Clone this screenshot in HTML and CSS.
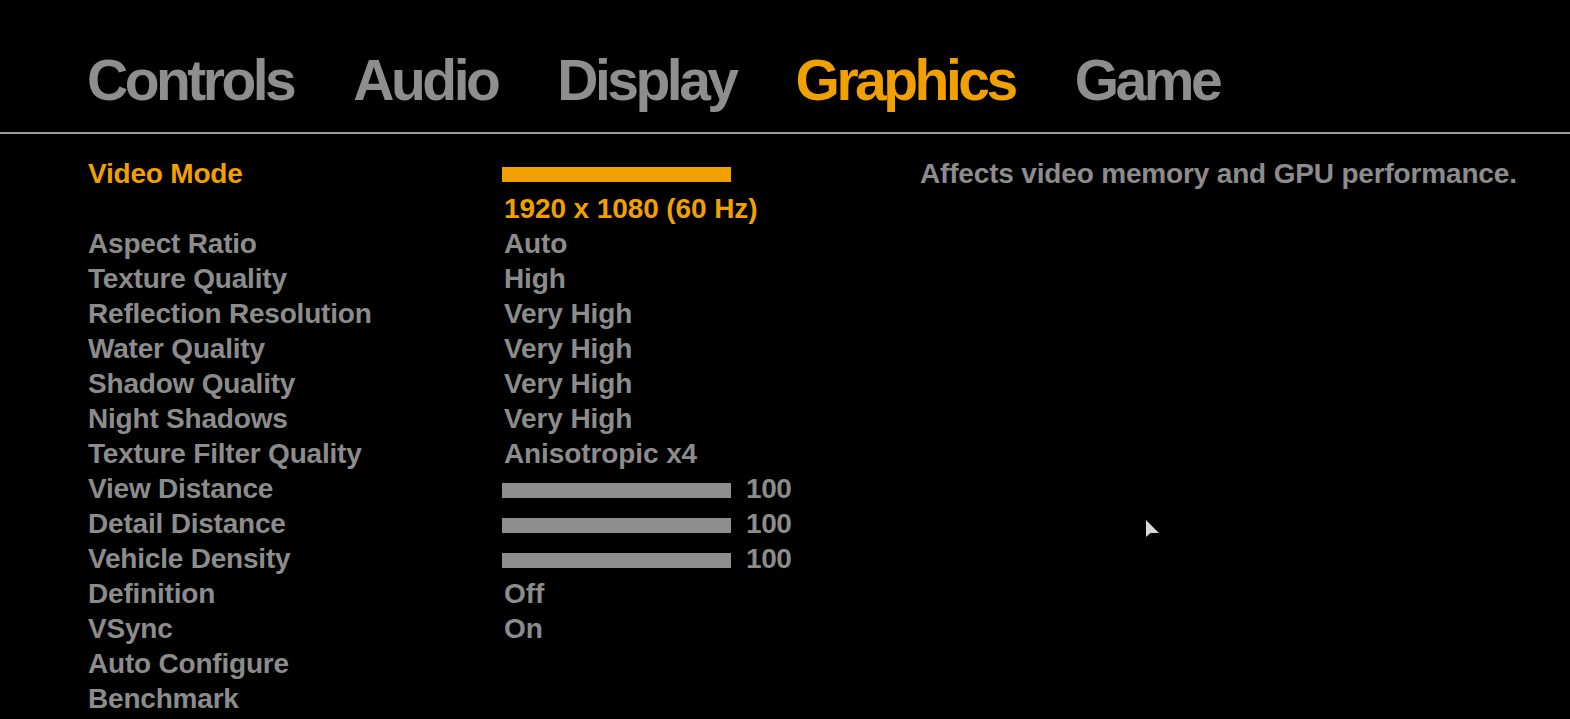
FILE: index.html
```html
<!DOCTYPE html>
<html>
<head>
<meta charset="utf-8">
<link rel="stylesheet" href="styles.css">
</head>
<body>
<header class="tabs">
  <span class="tab">Controls</span>
  <span class="tab">Audio</span>
  <span class="tab">Display</span>
  <span class="tab active">Graphics</span>
  <span class="tab">Game</span>
</header>
<main class="content">
  <div class="settings">
    <div class="label active">Video Mode</div>
    <div class="value"><div class="bar orange"></div></div>
    <div class="label"></div>
    <div class="value text active">1920 x 1080 (60 Hz)</div>

    <div class="label">Aspect Ratio</div><div class="value text">Auto</div>
    <div class="label">Texture Quality</div><div class="value text">High</div>
    <div class="label">Reflection Resolution</div><div class="value text">Very High</div>
    <div class="label">Water Quality</div><div class="value text">Very High</div>
    <div class="label">Shadow Quality</div><div class="value text">Very High</div>
    <div class="label">Night Shadows</div><div class="value text">Very High</div>
    <div class="label">Texture Filter Quality</div><div class="value text">Anisotropic x4</div>
    <div class="label">View Distance</div><div class="value slider"><div class="bar"></div><span>100</span></div>
    <div class="label">Detail Distance</div><div class="value slider"><div class="bar"></div><span>100</span></div>
    <div class="label">Vehicle Density</div><div class="value slider"><div class="bar"></div><span>100</span></div>
    <div class="label">Definition</div><div class="value text">Off</div>
    <div class="label">VSync</div><div class="value text">On</div>
    <div class="label">Auto Configure</div><div class="value"></div>
    <div class="label">Benchmark</div><div class="value"></div>
  </div>
  <div class="desc">Affects video memory and GPU performance.</div>
</main>
<svg class="cursor" width="16" height="22" viewBox="0 0 16 22">
  <path d="M1 1 L1 18 L5.5 14 L14 14 Z" fill="#d8d8d8"/>
</svg>
</body>
</html>
```
FILE: styles.css
```css
html, body {
  margin: 0;
  padding: 0;
  background: #000;
  height: 100%;
  overflow: hidden;
}
body {
  font-family: "Liberation Sans", Arial, sans-serif;
  font-weight: bold;
  color: #8c8c8c;
  position: relative;
}
.tabs {
  display: flex;
  gap: 60px;
  padding: 52px 0 0 87px;
  height: 80px;
  border-bottom: 2px solid #9c9c9c;
}
.tab {
  font-size: 57px;
  line-height: 57px;
  letter-spacing: -3.5px;
  color: #8e8e8e;
}
.tab.active, .label.active, .value.active {
  color: #f0a000;
}
.content {
  display: flex;
  padding: 22px 0 0 88px;
}
.settings {
  display: grid;
  grid-template-columns: 414px 417px;
  grid-auto-rows: 35px;
  font-size: 28px;
  line-height: 35px;
  letter-spacing: -0.2px;
}
.value {
  display: flex;
  align-items: flex-start;
}
.value.text {
  padding-left: 2px;
  letter-spacing: -0.1px;
}
.bar {
  width: 229px;
  height: 15px;
  margin-top: 12px;
  background: #8e8e8e;
}
.bar.orange {
  background: #f0a000;
  margin-top: 11px;
}
.slider span {
  margin-left: 15px;
  letter-spacing: -0.4px;
}
.desc {
  font-size: 28px;
  line-height: 35px;
  letter-spacing: -0.17px;
  padding-left: 1px;
}
.cursor {
  position: absolute;
  left: 1145px;
  top: 519px;
}
```
